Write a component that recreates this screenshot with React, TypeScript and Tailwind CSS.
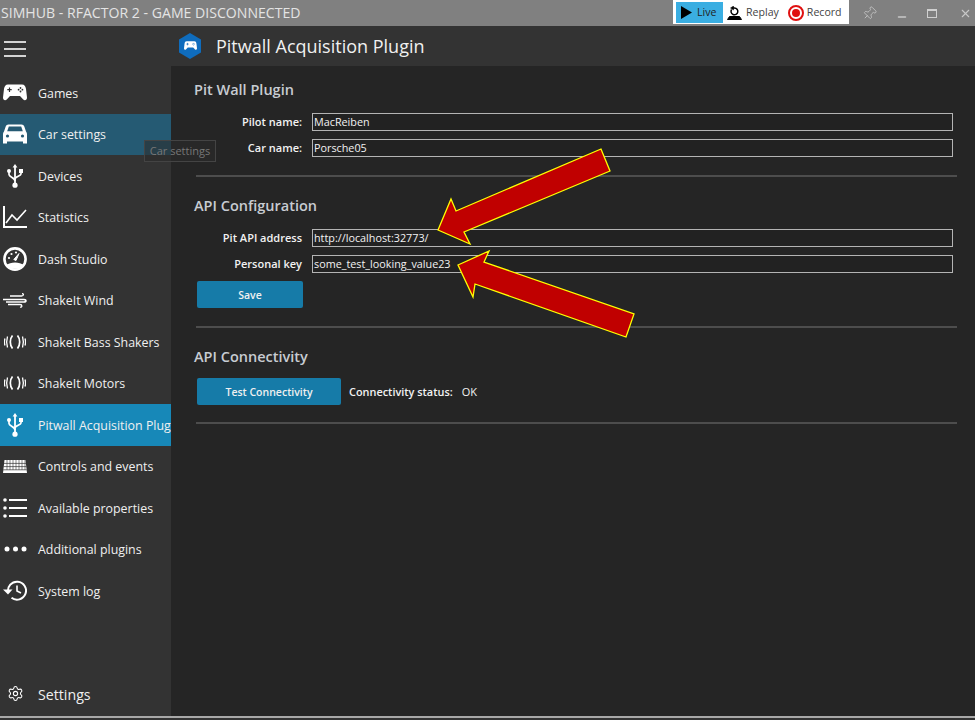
import { Settings, Pin, Minus, X } from "lucide-react"
import type { ReactNode } from "react"

function PadIcon({ width, fill, cut }: { width: number; fill: string; cut: string }) {
    return (
        <svg width={width} viewBox="0 0 24 17">
            <path d="M5 0.5H19C21.5 0.5 22.4 2 23 5L24 13.5C24 16.5 21.5 17 20 15.2L17 12H7L4 15.2C2.5 17 0 16.5 0 13.5L1 5C1.6 2 2.5 0.5 5 0.5Z" fill={fill} />
            <path d="M6.5 3.5V8M4.3 5.7H8.7" stroke={cut} strokeWidth="1.2" />
            <circle cx="17.5" cy="4" r="0.9" fill={cut} />
            <circle cx="17.5" cy="7.5" r="0.9" fill={cut} />
            <circle cx="15.6" cy="5.7" r="0.9" fill={cut} />
            <circle cx="19.4" cy="5.7" r="0.9" fill={cut} />
        </svg>
    )
}

function CarIcon() {
    return (
        <svg width="24" height="20" viewBox="0 0 24 20">
            <path d="M5.5 0.5H18.5C20 0.5 20.8 1.3 21.3 2.5L23 7.5C23.8 8.3 24 9.5 24 10.5V19.5H20V17.5H4V19.5H0V10.5C0 9.5 0.2 8.3 1 7.5L2.7 2.5C3.2 1.3 4 0.5 5.5 0.5Z" fill="white" />
            <path d="M5.8 2.6H18.2L19.8 7.3H4.2Z" fill="#255a73" />
            <circle cx="4.5" cy="12" r="1.6" fill="#255a73" />
            <circle cx="19.5" cy="12" r="1.6" fill="#255a73" />
        </svg>
    )
}

function UsbIcon() {
    return (
        <svg width="16" height="24" viewBox="0 0 16 24" fill="white">
            <path d="M8 0L10.4 3.6H5.6Z" />
            <rect x="7.1" y="3" width="1.8" height="17" />
            <circle cx="8" cy="21.2" r="2.6" />
            <circle cx="2" cy="7" r="2" />
            <rect x="12" y="5" width="4" height="4" />
            <path d="M2 8V10.5C2 13 8 13.5 8 17" fill="none" stroke="white" strokeWidth="1.7" />
            <path d="M14 8V10C14 12 8 12.5 8 15" fill="none" stroke="white" strokeWidth="1.7" />
        </svg>
    )
}

function StatsIcon() {
    return (
        <svg width="24" height="22" viewBox="0 0 24 22" fill="none" stroke="white" strokeWidth="2">
            <path d="M1 0V21H24" />
            <path d="M3 17L9 9L14 14L23 4" strokeWidth="1.6" />
        </svg>
    )
}

function GaugeIcon() {
    return (
        <svg width="24" height="24" viewBox="0 0 24 24">
            <circle cx="12" cy="12" r="10.6" fill="none" stroke="white" strokeWidth="2.6" />
            <path d="M3.5 18C7 14.5 17 14.5 20.5 18C17 23 7 23 3.5 18Z" fill="white" />
            <path d="M10.8 12.5L16 6.5L13 13.5Z" fill="white" stroke="white" />
            <circle cx="6" cy="11" r="1.1" fill="white" />
            <circle cx="8.5" cy="7" r="1.1" fill="white" />
            <circle cx="13" cy="5.5" r="1.1" fill="white" />
        </svg>
    )
}

function WindIcon() {
    return (
        <svg width="24" height="15" viewBox="0 0 24 15" fill="none" stroke="white" strokeWidth="1.3">
            <path d="M7 3H18.5C21 3 21 0.6 19 0.6" />
            <path d="M0 6.5H21C23.5 6.5 23.5 9 21 9H3" strokeWidth="1.7" />
            <path d="M5 11.5H17C19.5 11.5 19.5 14.5 17 14.2" />
        </svg>
    )
}

function ShakeIcon() {
    return (
        <svg width="22" height="14" viewBox="0 0 22 14" fill="none" stroke="white" strokeWidth="1.3">
            <path d="M1 3.5C0.2 6 0.2 8 1 10.5" />
            <path d="M3.5 1.5C2.4 5 2.4 9 3.5 12.5" />
            <path d="M8.5 0.5C5.6 4 5.6 10 8.5 13.5" strokeWidth="1.7" />
            <path d="M13.5 0.5C16.4 4 16.4 10 13.5 13.5" strokeWidth="1.7" />
            <path d="M18.5 1.5C19.6 5 19.6 9 18.5 12.5" />
            <path d="M21 3.5C21.8 6 21.8 8 21 10.5" />
        </svg>
    )
}

function KeyboardIcon() {
    return (
        <svg width="24" height="13" viewBox="0 0 24 13">
            <path d="M1.5 0H22.5L24 13H0Z" fill="white" />
            <path d="M0.8 3.4H23.2M0.5 6.6H23.5M0.2 9.8H23.8" stroke="#333333" strokeWidth="0.7" />
            <path d="M4 0V9.8M7 0V9.8M10 0V9.8M13 0V9.8M16 0V9.8M19 0V9.8M22 0V9.8" stroke="#333333" strokeWidth="0.6" />
        </svg>
    )
}

function ListIcon() {
    return (
        <svg width="24" height="20" viewBox="0 0 24 20" fill="white">
            <circle cx="2" cy="2" r="1.8" />
            <rect x="6" y="1" width="18" height="2" />
            <circle cx="2" cy="10" r="1.8" />
            <rect x="6" y="9" width="18" height="2" />
            <circle cx="2" cy="18" r="1.8" />
            <rect x="6" y="17" width="18" height="2" />
        </svg>
    )
}

function DotsIcon() {
    return (
        <svg width="23" height="6" viewBox="0 0 23 6" fill="white">
            <circle cx="3" cy="3" r="2.5" />
            <circle cx="11.5" cy="3" r="2.5" />
            <circle cx="20" cy="3" r="2.5" />
        </svg>
    )
}

function HistoryIcon() {
    return (
        <svg width="24" height="21" viewBox="0 0 24 21" fill="none" stroke="white" strokeWidth="2">
            <path d="M5.2 12.5A9 9 0 1 1 8.5 17.8" />
            <path d="M0 9.5H9.5L5 14.5Z" fill="white" stroke="none" />
            <path d="M14 5.5V11L18 13" strokeWidth="1.6" />
        </svg>
    )
}

function Hamburger() {
    return (
        <svg width="22" height="16" viewBox="0 0 22 16" fill="#d4d4d4">
            <rect y="0" width="22" height="2" />
            <rect y="7" width="22" height="2" />
            <rect y="14" width="22" height="2" />
        </svg>
    )
}

function LogoHex() {
    return (
        <div className="relative w-[22px] h-[26px] flex items-center justify-center">
            <svg className="absolute inset-0" width="22" height="26" viewBox="0 0 22 26">
                <path d="M11 0L22 6.5V19.5L11 26L0 19.5V6.5Z" fill="#0f6cbd" />
            </svg>
            <div className="relative flex">
                <PadIcon width={13} fill="white" cut="#0f6cbd" />
            </div>
        </div>
    )
}

function ReplayIcon() {
    return (
        <svg width="15" height="14" viewBox="0 0 15 14" fill="none" stroke="black">
            <path d="M4.6 3.5A3.4 3.4 0 1 0 7.5 2H5" strokeWidth="1.5" />
            <path d="M6.5 0L3.5 2L6.5 4Z" fill="black" strokeWidth="0.5" />
            <path d="M2.5 10.5H12.5L14.5 13.5H0.5Z" fill="black" />
        </svg>
    )
}

type NavItem = { label: string; icon: ReactNode; cls?: string }

const navItems: NavItem[] = [
    { label: "Games", icon: <PadIcon width={24} fill="white" cut="#333333" /> },
    { label: "Car settings", icon: <CarIcon />, cls: "bg-[#255a73]" },
    { label: "Devices", icon: <UsbIcon /> },
    { label: "Statistics", icon: <StatsIcon /> },
    { label: "Dash Studio", icon: <GaugeIcon /> },
    { label: "ShakeIt Wind", icon: <WindIcon /> },
    { label: "ShakeIt Bass Shakers", icon: <ShakeIcon /> },
    { label: "ShakeIt Motors", icon: <ShakeIcon /> },
    { label: "Pitwall Acquisition Plugin", icon: <UsbIcon />, cls: "bg-[#1788b8]" },
    { label: "Controls and events", icon: <KeyboardIcon /> },
    { label: "Available properties", icon: <ListIcon /> },
    { label: "Additional plugins", icon: <DotsIcon /> },
    { label: "System log", icon: <HistoryIcon /> },
]

function FormRow({ label, value }: { label: string; value: string }) {
    return (
        <div className="flex items-center h-[18px]">
            <div className="w-[108px] text-right text-[11px] font-semibold text-[#f2f2f2]">{label}</div>
            <div className="ml-[10px] w-[641px] h-[18px] border border-[#b4b4b4] bg-[#222222] pl-[1px] text-[10.8px] leading-[15px] text-[#f2f2f2]">
                {value}
            </div>
        </div>
    )
}

function Divider() {
    return <div className="ml-[2px] w-[761px] h-[2px] bg-[#4d4d4d]" />
}

function Heading({ children }: { children: ReactNode }) {
    return <div className="h-[20px] text-[14.5px] leading-[20px] font-semibold text-[#c8ccd2]">{children}</div>
}

function ActionButton({ label, width }: { label: string; width: string }) {
    return (
        <div className={`${width} h-[27px] rounded-[2px] bg-[#167ba8] flex items-center justify-center pt-[3px] text-[10.5px] font-semibold text-[#f0f0f0]`}>
            {label}
        </div>
    )
}

export default function App() {
    return (
        <div className="relative w-[975px] h-[720px] overflow-hidden bg-[#252525] flex flex-col font-['Open_Sans',sans-serif]">
            {/* Title bar */}
            <div className="flex-none h-[26px] bg-[#808080] flex items-start justify-between">
                <div className="pl-[1px] h-[26px] leading-[26px] text-[14.1px] text-[#e4e4e4]">SIMHUB - RFACTOR 2 - GAME DISCONNECTED</div>
                <div className="flex items-start h-[26px]">
                    <div className="w-[176px] h-[24px] bg-white flex items-start pt-[2px] pl-[3px] text-[10.6px] leading-[21px] text-[#444]">
                        <div className="w-[47px] h-[21px] bg-[#3aaee2] flex items-center pl-[5px] gap-[5px] text-[#222]">
                            <svg width="11" height="13" viewBox="0 0 11 13"><path d="M0 0L11 6.5L0 13Z" fill="black" /></svg>
                            <span>Live</span>
                        </div>
                        <div className="ml-[4px] h-[21px] flex items-center gap-[4px]">
                            <ReplayIcon />
                            <span>Replay</span>
                        </div>
                        <div className="ml-[9px] h-[21px] flex items-center gap-[3px]">
                            <div className="w-[16px] h-[16px] rounded-full border-[2px] border-[#e01010] flex items-center justify-center">
                                <div className="w-[8px] h-[8px] rounded-full bg-[#e01010]" />
                            </div>
                            <span>Record</span>
                        </div>
                    </div>
                    <div className="w-[126px] h-[26px] flex items-center text-[#c8c8c8]">
                        <Pin size={15} className="ml-[13px] rotate-45" strokeWidth={1.3} />
                        <Minus size={12} className="ml-[19px] mt-[7px]" strokeWidth={3} />
                        <div className="ml-[19px] w-[10px] h-[9px] border border-[#d0d0d0] border-t-[2px]" />
                        <X size={13} className="ml-[22px]" strokeWidth={2} />
                    </div>
                </div>
            </div>

            <div className="flex-1 flex min-h-0">
                {/* Sidebar */}
                <div className="flex-none w-[171px] bg-[#333333] flex flex-col">
                    <div className="h-[46px] pl-[4px] pt-[15px]">
                        <Hamburger />
                    </div>
                    <div className="flex flex-col">
                        {navItems.map((item) => (
                            <div key={item.label} className={`h-[41.5px] flex items-center overflow-hidden ${item.cls ?? ""}`}>
                                <div className="w-[30px] flex-none flex justify-center items-center">{item.icon}</div>
                                <span className="ml-[8px] pt-[3px] whitespace-nowrap text-[12.4px] text-[#f0f0f0]">{item.label}</span>
                            </div>
                        ))}
                    </div>
                    <div className="mt-auto h-[42px] flex items-center mb-[2px]">
                        <div className="w-[30px] flex justify-center">
                            <Settings size={17} color="white" strokeWidth={1.5} />
                        </div>
                        <span className="ml-[8px] pt-[4px] text-[14.2px] text-[#f0f0f0]">Settings</span>
                    </div>
                </div>

                {/* Main */}
                <div className="flex-1 flex flex-col min-w-0">
                    <div className="flex-none h-[40px] bg-[#333333] flex items-center pl-[8px]">
                        <LogoHex />
                        <span className="ml-[15px] text-[18px] text-[#f0f0f0]">Pitwall Acquisition Plugin</span>
                    </div>
                    <div className="flex-1 pl-[23px] pt-[14px]">
                        <Heading>Pit Wall Plugin</Heading>
                        <div className="mt-[13px] flex flex-col gap-[8px]">
                            <FormRow label="Pilot name:" value="MacReiben" />
                            <FormRow label="Car name:" value="Porsche05" />
                        </div>
                        <div className="mt-[18px]"><Divider /></div>
                        <div className="mt-[19px]"><Heading>API Configuration</Heading></div>
                        <div className="mt-[13px] flex flex-col gap-[8px]">
                            <FormRow label="Pit API address" value="http://localhost:32773/" />
                            <FormRow label="Personal key" value="some_test_looking_value23" />
                        </div>
                        <div className="mt-[8px] ml-[3px]"><ActionButton label="Save" width="w-[106px]" /></div>
                        <div className="mt-[18px]"><Divider /></div>
                        <div className="mt-[19px]"><Heading>API Connectivity</Heading></div>
                        <div className="mt-[11px] ml-[3px] flex items-center">
                            <ActionButton label="Test Connectivity" width="w-[144px]" />
                            <span className="ml-[8px] pt-[2px] text-[10.9px] font-semibold text-[#f2f2f2]">Connectivity status:</span>
                            <span className="ml-[9px] pt-[2px] text-[11px] text-[#f2f2f2]">OK</span>
                        </div>
                        <div className="mt-[17px]"><Divider /></div>
                    </div>
                </div>
            </div>
            <div className="flex-none h-[2px] bg-[#a8a8a8]" />
            <div className="flex-none h-[2px] bg-[#333333]" />

            {/* Tooltip */}
            <div className="absolute left-[144px] top-[140px] w-[72px] h-[22px] bg-[#2b2b2b]/60 border border-[#444] flex items-center justify-center text-[11px] text-[#777]">
                Car settings
            </div>

            {/* Annotation arrows */}
            <svg className="absolute left-0 top-0 pointer-events-none" width="975" height="720">
                <polygon points="438,230 451,199 456,211 601,149 610,171 464,232 470,244" fill="#c00000" stroke="#ffff00" strokeWidth="1.3" />
                <polygon points="458,265 489,251 484,262 634,314 626,337 475,284 473,297" fill="#c00000" stroke="#ffff00" strokeWidth="1.3" />
            </svg>
        </div>
    )
}
